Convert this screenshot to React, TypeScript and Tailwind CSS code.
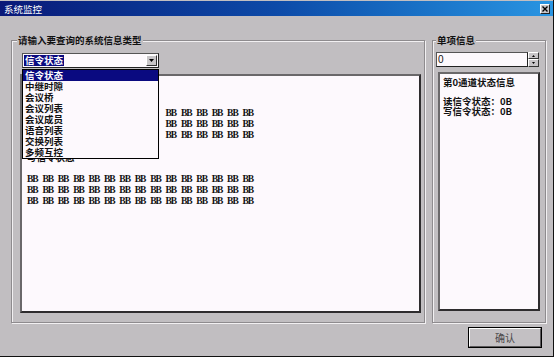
import React from "react";

const cjk = "font-['Noto_Sans_CJK_SC','Noto_Sans',sans-serif]";

function Sunken({ className = "", children }: { className?: string; children?: React.ReactNode }) {
  return (
    <div
      className={
        "bg-[#fdf9fd] border-2 border-t-[#6a686a] border-l-[#6a686a] border-r-[#2e2c2e] border-b-[#2e2c2e] " +
        className
      }
    >
      {children}
    </div>
  );
}

function Raised({ className = "", children }: { className?: string; children?: React.ReactNode }) {
  return (
    <div
      className={
        "bg-[#c8c5c8] border border-t-white border-l-white border-r-[#333] border-b-[#333] flex items-center justify-center " +
        className
      }
    >
      {children}
    </div>
  );
}

function BBRow({ hidden = 0 }: { hidden?: number }) {
  return (
    <div className="h-[11px] leading-[11px] flex font-['Liberation_Serif',serif] font-bold text-[9.5px] text-[#111]">
      {Array.from({ length: 15 }).map((_, i) => (
        <span key={i} className={"inline-block w-[15.4px] shrink-0 tracking-[-1px] " + (i < hidden ? "invisible" : "")}>
          BB
        </span>
      ))}
    </div>
  );
}

const items = ["信令状态", "中继时隙", "会议桥", "会议列表", "会议成员", "语音列表", "交换列表", "多频互控"];

export default function App() {
  return (
    <div className="w-[556px] h-[359px] bg-white overflow-hidden">
      <div className="w-[554px] h-[357px] bg-[#c1bec1] border-r border-b border-r-[#111] border-b-[#111] flex flex-col">
        {/* Title bar */}
        <div className="mt-[1px] h-[15px] bg-linear-to-r from-[#0a1878] via-[#0d4aa8] to-[#2a95e2] flex items-center justify-between pl-[4px] pr-[3px]">
          <span className={cjk + " text-white text-[9.5px] leading-[10px]"}>系统监控</span>
          <div className="w-[10px] h-[10px] bg-[#c8c5c8] border border-t-white border-l-white border-r-[#222] border-b-[#222] flex items-center justify-center">
            <svg width="6" height="6" viewBox="0 0 6 6">
              <path d="M0.5 0.5 L5.5 5.5 M5.5 0.5 L0.5 5.5" stroke="#000" strokeWidth="1.4" />
            </svg>
          </div>
        </div>

        {/* Body */}
        <div className="flex-1 flex flex-col">
          <div className="flex mt-[24px] ml-[11px] gap-[7px]">
            {/* Left group */}
            <div className="relative w-[414px] h-[283px] border border-[#8e8b8e] shadow-[inset_1px_1px_0_#f2f0f2,1px_1px_0_#f2f0f2] pl-[8px] pt-[12px]">
              <span className={cjk + " absolute left-[5px] -top-[7px] bg-[#c1bec1] px-[1px] text-[9.5px] leading-[12px] font-bold text-[#111]"}>
                请输入要查询的系统信息类型
              </span>
              {/* Combo */}
              <div className="relative ml-[2px] w-[137px] h-[15px] bg-[#fdf9fd] border border-t-[#555] border-l-[#555] border-r-[#222] border-b-[#222] flex items-center pl-[1px] pr-[1px]">
                <span className={cjk + " bg-[#0a0a80] text-white text-[9.5px] leading-[11px] font-bold px-[1px]"}>信令状态</span>
                <div className="ml-auto w-[11px] h-[11px] bg-[#c8c5c8] border border-t-white border-l-white border-r-[#333] border-b-[#333] flex items-center justify-center">
                  <svg width="5" height="3" viewBox="0 0 5 3">
                    <path d="M0 0 H5 L2.5 3 Z" fill="#000" />
                  </svg>
                </div>
                {/* Dropdown list */}
                <div className="absolute left-[-1px] top-[15px] w-[137px] bg-[#fdf9fd] border border-black z-10">
                  {items.map((t, i) => (
                    <div
                      key={t}
                      className={
                        cjk +
                        " h-[11px] leading-[11px] text-[9.5px] font-bold pl-[2px] " +
                        (i === 0 ? "bg-[#0a0a80] text-white" : "text-[#111]")
                      }
                    >
                      {t}
                    </div>
                  ))}
                </div>
              </div>
              {/* Text area */}
              <Sunken className="mt-[6px] w-[401px] h-[239px] pt-[10px] pl-[5px]">
                <div className="h-[11px]" />
                <div className="h-[11px]" />
                <BBRow hidden={9} />
                <BBRow hidden={9} />
                <BBRow hidden={9} />
                <div className="h-[11px]" />
                <div className={cjk + " h-[11px] leading-[11px] text-[9.5px] font-bold text-[#111]"}>写信令状态</div>
                <div className="h-[11px]" />
                <BBRow />
                <BBRow />
                <BBRow />
              </Sunken>
            </div>

            {/* Right group */}
            <div className="relative w-[114px] h-[283px] border border-[#8e8b8e] shadow-[inset_1px_1px_0_#f2f0f2,1px_1px_0_#f2f0f2] pl-[3px] pt-[11px]">
              <span className={cjk + " absolute left-[3px] -top-[7px] bg-[#c1bec1] px-[1px] text-[9.5px] leading-[12px] font-bold text-[#111]"}>
                单项信息
              </span>
              <div className="flex h-[15px]">
                <div className="w-[92px] h-[15px] bg-[#fdf9fd] border border-t-[#555] border-l-[#555] border-r-[#222] border-b-[#222] flex items-center pl-[1px]">
                  <span className="font-['Liberation_Sans',sans-serif] text-[10px] leading-[11px] text-[#111]">0</span>
                </div>
                <div className="w-[11px] flex flex-col">
                  <Raised className="h-[7px]">
                    <svg width="3" height="2" viewBox="0 0 3 2">
                      <path d="M0 2 H3 L1.5 0 Z" fill="#000" />
                    </svg>
                  </Raised>
                  <Raised className="h-[8px]">
                    <svg width="3" height="2" viewBox="0 0 3 2">
                      <path d="M0 0 H3 L1.5 2 Z" fill="#000" />
                    </svg>
                  </Raised>
                </div>
              </div>
              <Sunken className="mt-[5px] ml-[2px] w-[102px] h-[239px] pt-[3px] pl-[3px]">
                <div className={cjk + " h-[10px] leading-[10px] text-[9.5px] font-bold text-[#111]"}>第0通道状态信息</div>
                <div className="h-[9px]" />
                <div className={cjk + " h-[10px] leading-[10px] text-[9.5px] font-bold text-[#111]"}>读信令状态：0B</div>
                <div className={cjk + " h-[10px] leading-[10px] text-[9.5px] font-bold text-[#111]"}>写信令状态：0B</div>
              </Sunken>
            </div>
          </div>

          {/* Button row */}
          <div className="flex justify-end mt-[4px] mr-[11px]">
            <div className="w-[74px] h-[21px] border border-black">
              <div className="w-full h-full bg-[#c3c0c3] border border-t-white border-l-white border-r-[#5a585a] border-b-[#5a585a] flex items-center justify-center">
                <span className={cjk + " text-[10px] leading-[10px] text-[#4a484a]"}>确认</span>
              </div>
            </div>
          </div>
        </div>
      </div>
    </div>
  );
}
